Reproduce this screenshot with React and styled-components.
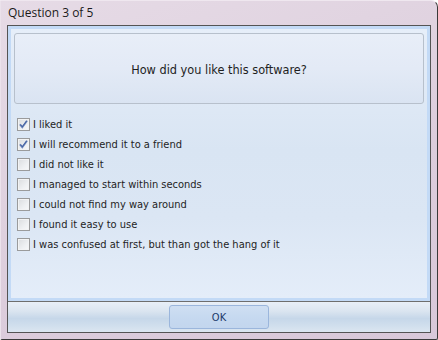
import React from "react";
import styled, { createGlobalStyle } from "styled-components";

const Global = createGlobalStyle`
  html, body { margin: 0; padding: 0; background: #ffffff; }
  * { box-sizing: border-box; }
`;

const Window = styled.div`
  width: 438px;
  height: 340px;
  display: flex;
  flex-direction: column;
  padding: 0 6px 6px 6px;
  background: linear-gradient(160deg, #e6dbe6 0%, #dccddc 60%, #d8c8d9 100%);
  border-left: 1px solid #ebe2eb;
  border-right: 1px solid #3a3a3a;
  border-bottom: 1px solid #3a3a3a;
  border-top: 1px solid #efe7ef;
  border-top-right-radius: 7px;
  border-bottom-left-radius: 2px;
  border-bottom-right-radius: 2px;
`;

const TitleBar = styled.div`
  height: 24px;
  display: flex;
  align-items: center;
  padding-left: 1px;
  padding-bottom: 1px;
  font-family: "Open Sans", "Noto Sans", sans-serif;
  font-size: 12px;
  color: #1a1a1a;
`;

const Client = styled.div`
  flex: 1;
  display: flex;
  flex-direction: column;
  border: 1px solid #545454;
  background: #dde7f3;
`;

const Content = styled.div`
  flex: 1;
  border: 3px solid #c3daf6;
  background: linear-gradient(180deg, #e6eef9 0%, #d9e5f3 45%, #dbe6f4 70%, #e4edf9 100%);
  padding: 4px 3px 0 3px;
  display: flex;
  flex-direction: column;
`;

const Header = styled.div`
  height: 71px;
  border: 1px solid #b7c0cc;
  border-radius: 3px;
  background: linear-gradient(180deg, #e8eef8 0%, #e3eaf6 50%, #dae4f2 100%);
  display: flex;
  align-items: center;
  justify-content: center;
  font-family: "DejaVu Sans Condensed", "DejaVu Sans", sans-serif;
  font-size: 12.6px;
  color: #1e1e1e;
  padding-top: 1px;
`;

const List = styled.ul`
  list-style: none;
  margin: 10px 0 0 0;
  padding: 0 0 0 3px;
  display: flex;
  flex-direction: column;
`;

const Row = styled.li`
  height: 20px;
  display: flex;
  align-items: center;
  gap: 3px;
  font-family: "DejaVu Sans Condensed", "DejaVu Sans", sans-serif;
  font-size: 11px;
  color: #1e1e1e;
`;

const Box = styled.span`
  width: 13px;
  height: 13px;
  flex: none;
  border: 1px solid #9a9b9c;
  background: linear-gradient(135deg, #dadcdf 0%, #eef0f2 60%, #f8f9fa 100%);
  box-shadow: inset 0 0 0 1px #f2f3f4;
  display: flex;
  align-items: center;
  justify-content: center;
`;

const Footer = styled.div`
  height: 31px;
  border-top: 1px solid #6e6e6e;
  background: linear-gradient(180deg, #e8eff7 0%, #dbe5f0 30%, #c6d7e9 55%, #d1dfed 80%, #dbe6f1 100%);
  display: flex;
  align-items: center;
  justify-content: center;
`;

const Button = styled.button`
  width: 100px;
  height: 24px;
  border: 1px solid #9bb6dc;
  border-radius: 3px;
  background: linear-gradient(180deg, #cfdff2 0%, #c6d9f0 50%, #c3d6ee 100%);
  font-family: "DejaVu Sans Condensed", "DejaVu Sans", sans-serif;
  font-size: 11px;
  color: #1d3a6b;
  padding: 0;
  cursor: default;
`;

const Check = () => (
  <svg width="11" height="11" viewBox="0 0 11 11">
    <path d="M2 5.4 L4.3 8.2 L9 1.8" fill="none" stroke="#6a83bb" strokeWidth="1.9" />
    <path d="M2.3 5.6 L4.3 7.8 L8.7 1.8" fill="none" stroke="#3c5a98" strokeWidth="0.8" />
  </svg>
);

const options = [
  { label: "I liked it", checked: true },
  { label: "I will recommend it to a friend", checked: true },
  { label: "I did not like it", checked: false },
  { label: "I managed to start within seconds", checked: false },
  { label: "I could not find my way around", checked: false },
  { label: "I found it easy to use", checked: false },
  { label: "I was confused at first, but than got the hang of it", checked: false },
];

export default function App() {
  return (
    <>
      <Global />
      <Window>
        <TitleBar>Question 3 of 5</TitleBar>
        <Client>
          <Content>
            <Header>How did you like this software?</Header>
            <List>
              {options.map((o) => (
                <Row key={o.label}>
                  <Box>{o.checked && <Check />}</Box>
                  <span>{o.label}</span>
                </Row>
              ))}
            </List>
          </Content>
          <Footer>
            <Button>OK</Button>
          </Footer>
        </Client>
      </Window>
    </>
  );
}
